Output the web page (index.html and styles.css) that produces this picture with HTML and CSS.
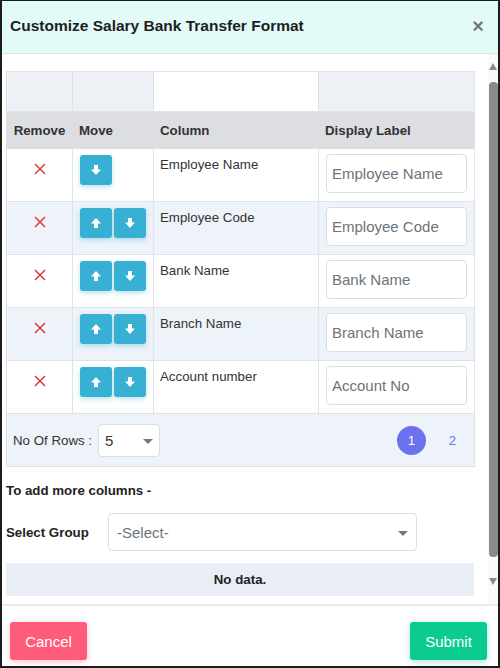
FILE: index.html
```html
<!DOCTYPE html>
<html>
<head>
<meta charset="utf-8">
<link rel="stylesheet" href="styles.css">
</head>
<body>
<div class="modal">
  <header class="modal-header">
    <h1 class="title">Customize Salary Bank Transfer Format</h1>
    <span class="close">×</span>
  </header>
  <div class="modal-body">
    <div class="body-content">
      <table class="grid">
        <colgroup>
          <col class="c-remove"><col class="c-move"><col class="c-column"><col class="c-label">
        </colgroup>
        <tr class="filter-row">
          <td></td><td></td><td class="blank"></td><td></td>
        </tr>
        <tr class="head-row">
          <th class="center">Remove</th><th>Move</th><th class="pl">Column</th><th class="pl">Display Label</th>
        </tr>
        <tr class="data-row">
          <td class="center"><svg class="rm" viewBox="0 0 12 12" width="12" height="12"><path d="M1 1L11 11M11 1L1 11" stroke="#e0393b" stroke-width="1.5" fill="none"/></svg></td>
          <td class="move"><span class="mbtn"><svg viewBox="0 0 12 12" width="12" height="12"><path d="M4 1h4v4.6h3L6 11 1 5.6h3z" fill="#fff"/></svg></span></td>
          <td class="coltext">Employee Name</td>
          <td class="lbl"><div class="inp">Employee Name</div></td>
        </tr>
        <tr class="data-row alt">
          <td class="center"><svg class="rm" viewBox="0 0 12 12" width="12" height="12"><path d="M1 1L11 11M11 1L1 11" stroke="#e0393b" stroke-width="1.5" fill="none"/></svg></td>
          <td class="move"><span class="mbtn"><svg viewBox="0 0 12 12" width="12" height="12"><path d="M4 11h4V6.4h3L6 1 1 6.4h3z" fill="#fff"/></svg></span><span class="mbtn"><svg viewBox="0 0 12 12" width="12" height="12"><path d="M4 1h4v4.6h3L6 11 1 5.6h3z" fill="#fff"/></svg></span></td>
          <td class="coltext">Employee Code</td>
          <td class="lbl"><div class="inp">Employee Code</div></td>
        </tr>
        <tr class="data-row">
          <td class="center"><svg class="rm" viewBox="0 0 12 12" width="12" height="12"><path d="M1 1L11 11M11 1L1 11" stroke="#e0393b" stroke-width="1.5" fill="none"/></svg></td>
          <td class="move"><span class="mbtn"><svg viewBox="0 0 12 12" width="12" height="12"><path d="M4 11h4V6.4h3L6 1 1 6.4h3z" fill="#fff"/></svg></span><span class="mbtn"><svg viewBox="0 0 12 12" width="12" height="12"><path d="M4 1h4v4.6h3L6 11 1 5.6h3z" fill="#fff"/></svg></span></td>
          <td class="coltext">Bank Name</td>
          <td class="lbl"><div class="inp">Bank Name</div></td>
        </tr>
        <tr class="data-row alt">
          <td class="center"><svg class="rm" viewBox="0 0 12 12" width="12" height="12"><path d="M1 1L11 11M11 1L1 11" stroke="#e0393b" stroke-width="1.5" fill="none"/></svg></td>
          <td class="move"><span class="mbtn"><svg viewBox="0 0 12 12" width="12" height="12"><path d="M4 11h4V6.4h3L6 1 1 6.4h3z" fill="#fff"/></svg></span><span class="mbtn"><svg viewBox="0 0 12 12" width="12" height="12"><path d="M4 1h4v4.6h3L6 11 1 5.6h3z" fill="#fff"/></svg></span></td>
          <td class="coltext">Branch Name</td>
          <td class="lbl"><div class="inp">Branch Name</div></td>
        </tr>
        <tr class="data-row">
          <td class="center"><svg class="rm" viewBox="0 0 12 12" width="12" height="12"><path d="M1 1L11 11M11 1L1 11" stroke="#e0393b" stroke-width="1.5" fill="none"/></svg></td>
          <td class="move"><span class="mbtn"><svg viewBox="0 0 12 12" width="12" height="12"><path d="M4 11h4V6.4h3L6 1 1 6.4h3z" fill="#fff"/></svg></span><span class="mbtn"><svg viewBox="0 0 12 12" width="12" height="12"><path d="M4 1h4v4.6h3L6 11 1 5.6h3z" fill="#fff"/></svg></span></td>
          <td class="coltext">Account number</td>
          <td class="lbl"><div class="inp">Account No</div></td>
        </tr>
        <tr class="pager-row">
          <td colspan="4">
            <div class="pager">
              <div class="rows">
                <span>No Of Rows :</span>
                <div class="sel small"><span>5</span><span class="caret"></span></div>
              </div>
              <div class="pages">
                <span class="page active">1</span>
                <span class="page">2</span>
              </div>
            </div>
          </td>
        </tr>
      </table>
      <p class="hint">To add more columns -</p>
      <div class="group-row">
        <label class="group-label">Select Group</label>
        <div class="sel wide"><span class="ph">-Select-</span><span class="caret"></span></div>
      </div>
      <div class="nodata">No data.</div>
    </div>
    <div class="scrollbar">
      <span class="arrow up"></span>
      <span class="thumb"></span>
      <span class="arrow down"></span>
    </div>
  </div>
  <footer class="modal-footer">
    <button class="btn cancel">Cancel</button>
    <button class="btn submit">Submit</button>
  </footer>
</div>
</body>
</html>
```

FILE: styles.css
```css
* { box-sizing: border-box; }
html, body { margin: 0; padding: 0; background: #fff; }
body { font-family: "Liberation Sans", Arial, sans-serif; color: #333; }

.modal {
  width: 500px;
  height: 668px;
  border-style: solid;
  border-color: #1c1c1c;
  border-width: 1px 2px 2px 2px;
  display: flex;
  flex-direction: column;
  background: #fff;
}

.modal-header {
  height: 53px;
  background: #e3fbf8;
  border-bottom: 1px solid #d3e9e6;
  display: flex;
  align-items: center;
  justify-content: space-between;
  padding: 0 14px 2px 8px;
  flex: none;
}
.title {
  margin: 0;
  font-size: 15.5px;
  font-weight: bold;
  color: #1e1e1e;
}
.close {
  font-size: 20px;
  font-weight: bold;
  color: #777;
  line-height: 1;
}

.modal-body {
  height: 550px;
  display: flex;
  flex: none;
}
.body-content {
  flex: 1;
  overflow: hidden;
  padding: 17px 14px 0 4px;
}

.grid {
  width: 468px;
  border-collapse: collapse;
  font-size: 13.3px;
  table-layout: fixed;
}
.c-remove { width: 66px; }
.c-move { width: 81px; }
.c-column { width: 165px; }
.c-label { width: 156px; }

.grid td, .grid th {
  border: 1px solid #dfe3e9;
  padding: 0;
}
.filter-row td { height: 40px; background: #edf0f5; }
.filter-row td.blank { background: #fff; }
.head-row th {
  height: 37px;
  background: #dcdee2;
  font-weight: bold;
  color: #333;
  text-align: left;
  padding-left: 6px;
  border-color: #dcdee2;
}
.head-row th.center { text-align: center; padding-left: 0; }
.head-row th.pl { padding-left: 6px; }

.data-row td {
  height: 53px;
  vertical-align: top;
  background: #fff;
}
.data-row.alt td { background: #eef2f9; }
.data-row td.center { text-align: center; padding-top: 14px; }
.rm { display: inline-block; }
.move { padding: 6px 0 0 7px !important; }
.mbtn {
  display: inline-flex;
  align-items: center;
  justify-content: center;
  width: 32px;
  height: 30px;
  background: #37b0d4;
  border-radius: 3px;
  margin-right: 2px;
  box-shadow: 0 2px 5px rgba(55, 176, 212, 0.35);
  vertical-align: top;
}
.coltext { padding: 8px 6px 0 6px !important; color: #333; }
.lbl { padding: 5px 7px 0 7px !important; }
.inp {
  height: 39px;
  border: 1px solid #d9dee4;
  border-radius: 4px;
  background: #fff;
  font-size: 15px;
  color: #6c737a;
  padding: 0 5px;
  display: flex;
  align-items: center;
  white-space: nowrap;
}

.pager-row td { height: 53px; background: #eef2f9; }
.pager {
  display: flex;
  justify-content: space-between;
  align-items: center;
  padding: 0 7px 0 6px;
}
.rows { display: flex; align-items: center; gap: 6px; color: #333; }
.sel {
  display: flex;
  align-items: center;
  justify-content: space-between;
  background: #fff;
  border: 1px solid #dadfe5;
  border-radius: 4px;
  font-size: 15px;
  color: #333;
}
.sel.small { width: 62px; height: 33px; padding: 0 6px 0 6px; }
.caret {
  width: 0; height: 0;
  border-left: 5px solid transparent;
  border-right: 5px solid transparent;
  border-top: 5px solid #777;
  margin-top: 3px;
}
.pages { display: flex; align-items: center; gap: 12px; }
.page {
  width: 29px; height: 29px;
  display: flex; align-items: center; justify-content: center;
  color: #6f73ee;
  border-radius: 50%;
}
.page.active { background: #6c71ee; color: #fff; }

.hint {
  margin: 16px 0 0 0;
  font-size: 13.3px;
  font-weight: bold;
  color: #222;
}
.group-row {
  display: flex;
  align-items: center;
  margin-top: 15px;
}
.group-label {
  width: 102px;
  font-size: 13.3px;
  font-weight: bold;
  color: #222;
}
.sel.wide { width: 309px; height: 38px; padding: 0 8px 0 8px; }
.ph { color: #6c737a; }

.nodata {
  margin-top: 12px;
  width: 468px;
  height: 33px;
  background: #e9edf5;
  display: flex;
  align-items: center;
  justify-content: center;
  font-size: 13.3px;
  font-weight: bold;
  color: #222;
}

.scrollbar {
  width: 10px;
  flex: none;
  display: flex;
  flex-direction: column;
  align-items: center;
  padding: 9px 0 19px 0;
  background: #fafafa;
}
.arrow {
  width: 0; height: 0;
  border-left: 4.5px solid transparent;
  border-right: 4.5px solid transparent;
  flex: none;
}
.arrow.up { border-bottom: 7px solid #8a8a8a; }
.arrow.down { border-top: 7px solid #8a8a8a; }
.thumb {
  width: 9px;
  flex: 1;
  margin: 12px 0 21px 0;
  background: #8a8a8a;
  border-radius: 4px;
}

.modal-footer {
  flex: 1;
  border-top: 2px solid #e9ecef;
  display: flex;
  justify-content: space-between;
  align-items: flex-start;
  padding: 16px 11px 0 8px;
}
.btn {
  width: 77px;
  height: 38px;
  border: none;
  border-radius: 3px;
  color: #fff;
  font-family: "Liberation Sans", Arial, sans-serif;
  font-size: 15px;
}
.cancel { background: #ff5b7b; box-shadow: 0 2px 6px rgba(255, 91, 123, 0.35); }
.submit { background: #0ccb91; box-shadow: 0 2px 6px rgba(12, 203, 145, 0.35); }
```
